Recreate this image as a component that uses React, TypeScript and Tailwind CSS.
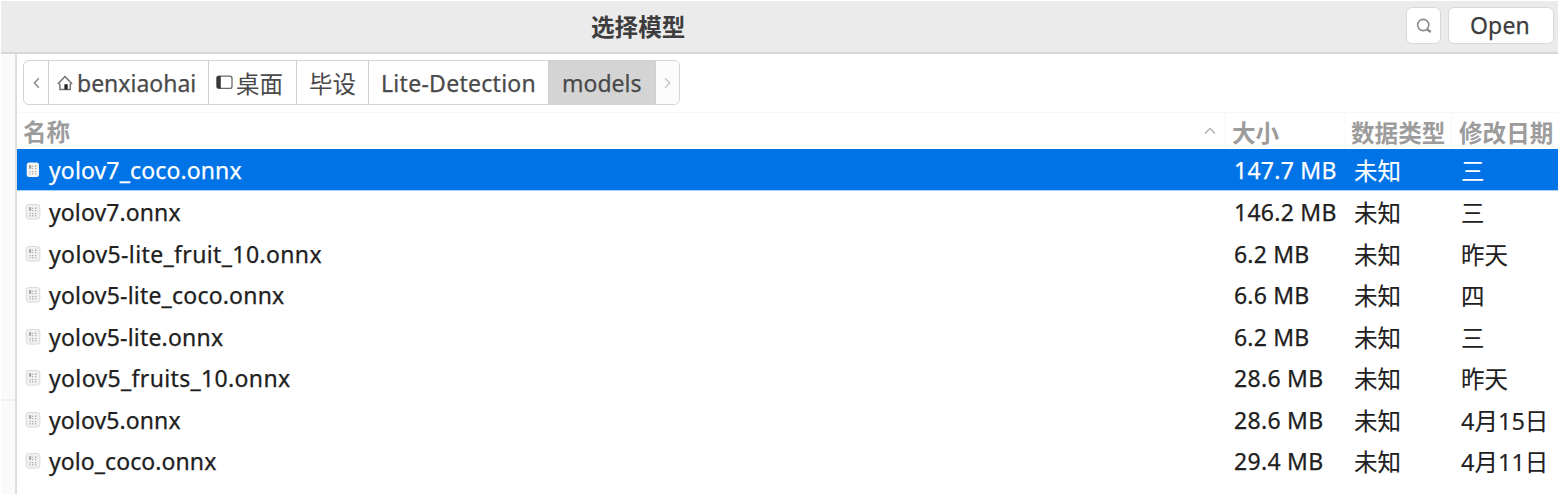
import type { ReactNode } from "react";

type FileRow = {
  name: string;
  nameSpacing: string;
  size: string;
  sizeSpacing: string;
  modified: string;
};

const files: FileRow[] = [
  { name: "yolov7_coco.onnx", nameSpacing: "tracking-[0.13px]", size: "147.7 MB", sizeSpacing: "tracking-[0.25px]", modified: "三" },
  { name: "yolov7.onnx", nameSpacing: "tracking-[0.1px]", size: "146.2 MB", sizeSpacing: "tracking-[0.25px]", modified: "三" },
  { name: "yolov5-lite_fruit_10.onnx", nameSpacing: "tracking-[0.37px]", size: "6.2 MB", sizeSpacing: "tracking-[0.2px]", modified: "昨天" },
  { name: "yolov5-lite_coco.onnx", nameSpacing: "tracking-[0.2px]", size: "6.6 MB", sizeSpacing: "tracking-[0.2px]", modified: "四" },
  { name: "yolov5-lite.onnx", nameSpacing: "tracking-[0.2px]", size: "6.2 MB", sizeSpacing: "tracking-[0.2px]", modified: "三" },
  { name: "yolov5_fruits_10.onnx", nameSpacing: "tracking-[0.35px]", size: "28.6 MB", sizeSpacing: "tracking-[0.3px]", modified: "昨天" },
  { name: "yolov5.onnx", nameSpacing: "tracking-[0.1px]", size: "28.6 MB", sizeSpacing: "tracking-[0.3px]", modified: "4月15日" },
  { name: "yolo_coco.onnx", nameSpacing: "tracking-[0.08px]", size: "29.4 MB", sizeSpacing: "tracking-[0.3px]", modified: "4月11日" },
];

function FileIcon({ selected }: { selected: boolean }) {
  return (
    <svg width="16" height="18" viewBox="0 0 16 18" className="block shrink-0">
      <rect
        x={selected ? 1.7 : 1.2}
        y="1.5"
        width={selected ? 12.3 : 13.6}
        height="14.6"
        rx="2.4"
        fill={selected ? "#f6f6f4" : "#f1f1f1"}
        stroke={selected ? "none" : "#dadada"}
      />
      <g fill={selected ? "#958f88" : "#999"}>
        <rect x="4" y="4.2" width="2.2" height="3.6" opacity=".85" />
        <rect x="7" y="4.8" width="1.2" height="1.2" opacity=".7" />
        <rect x="7" y="7" width="1.2" height="1.2" opacity=".7" />
        <rect x="10" y="4.4" width="1.4" height="1.6" opacity=".75" />
        <rect x="10" y="7" width="1.4" height="1.2" opacity=".7" />
        <rect x="4.4" y="10" width="1.4" height="1.2" opacity=".7" />
        <rect x="4.4" y="12.2" width="1.4" height="1.2" opacity=".7" />
        <rect x="7" y="10" width="1.3" height="1.2" opacity=".8" />
        <rect x="7" y="12.2" width="1.3" height="1.2" opacity=".8" />
        <rect x="10" y="10" width="1.4" height="1.2" opacity=".7" />
        <rect x="10" y="12.2" width="1.4" height="1.2" opacity=".7" />
      </g>
    </svg>
  );
}

function HomeIcon() {
  return (
    <svg width="16" height="16" viewBox="0 0 16 16" fill="none" className="block shrink-0">
      <path d="M.8 9 8 1.6 15.2 9M2.9 8.4v6h10.4v-6" stroke="#747474" strokeWidth="1.5" strokeLinejoin="round" />
      <path d="M7.4 9.2h3.3v5.2H7.4z" fill="#222" />
    </svg>
  );
}

function DesktopIcon() {
  return (
    <svg width="17" height="15" viewBox="0 0 17 15" fill="none" className="block shrink-0">
      <rect x="1" y="1.2" width="15" height="12.2" rx="2.2" stroke="#6a6a6a" strokeWidth="1.3" />
      <path d="M2.2 1h2.6v12.6H2.2Q.6 13.6.6 12V2.6Q.6 1 2.2 1z" fill="#383838" />
    </svg>
  );
}

function Crumb({ className, children }: { className: string; children: ReactNode }) {
  return (
    <div className={`flex h-full shrink-0 items-center whitespace-nowrap border-r border-[#cfcfcf] ${className}`}>
      {children}
    </div>
  );
}

export default function App() {
  return (
    <div className="flex h-[494px] w-[1558px] flex-col overflow-hidden bg-white pl-px pt-px font-['Noto_Sans','Noto_Sans_CJK_SC',sans-serif] text-[23px] text-[#2e2e2e] [-webkit-text-stroke:0.25px]">
      <header className="flex h-[53px] shrink-0 border-b-2 border-[#d8d8d8] bg-[#ebebeb]">
        <div className="w-[1405px] pl-[590px] pt-px font-['Noto_Sans_CJK_SC',sans-serif] text-[23.6px] font-bold leading-[48px] text-[#3d3d3d] [-webkit-text-stroke:0px]">
          选择模型
        </div>
        <button className="mt-[6px] flex h-[37px] w-[35px] items-center justify-center rounded-[6px] border border-[#d8d8d8] bg-white">
          <svg width="16" height="16" viewBox="0 0 16 16" fill="none" stroke="#8a8a8a" strokeWidth="1.6">
            <circle cx="7.2" cy="7" r="5.6" />
            <path d="m10.6 11 4.2 3" strokeWidth="2.2" />
          </svg>
        </button>
        <button className="ml-[7px] mt-[6px] h-[37px] w-[106px] rounded-[6px] border border-[#d8d8d8] bg-white pr-[2px] text-center leading-[35px] tracking-[0.2px] text-[#3d3d3d]">
          Open
        </button>
      </header>
      <div className="flex min-h-0 flex-1">
        <aside className="w-[16px] shrink-0 border-r-2 border-[#dedede] bg-[#fafafa]">
          <div className="h-[347px] border-b-2 border-[#f0f0f0]" />
        </aside>
        <main className="min-w-0 flex-1">
          <nav className="ml-[6px] mt-[6px] flex h-[45px] w-[657px] overflow-hidden rounded-[6px] border border-[#d4d4d4] text-[#4a4a4a]">
            <Crumb className="w-[25px] justify-center">
              <svg width="7" height="12" viewBox="0 0 7 12" fill="none" stroke="#8a8a8a" strokeWidth="1.5">
                <path d="M5.8 1.2 1.4 6l4.4 4.8" />
              </svg>
            </Crumb>
            <Crumb className="w-[160px] gap-[4px] pl-[8px]">
              <HomeIcon />
              <span className="pt-px">benxiaohai</span>
            </Crumb>
            <Crumb className="w-[88px] gap-[3px] pl-[7px]">
              <DesktopIcon />
              <span className="pt-[4px] text-[23.5px] [-webkit-text-stroke:0px]">桌面</span>
            </Crumb>
            <Crumb className="w-[72px] pl-[12px]">
              <span className="pt-[4px] text-[23.5px] [-webkit-text-stroke:0px]">毕设</span>
            </Crumb>
            <Crumb className="w-[180px] pl-[12px] pt-px tracking-[0.28px]">Lite-Detection</Crumb>
            <Crumb className="w-[107px] bg-[#d4d4d4] pl-[13px] pt-px">models</Crumb>
            <div className="flex flex-1 items-center justify-center bg-[#fcfcfc]">
              <svg width="7" height="12" viewBox="0 0 7 12" fill="none" stroke="#c6c6c6" strokeWidth="1.5">
                <path d="m1.2 1.2 4.4 4.8-4.4 4.8" />
              </svg>
            </div>
          </nav>
          <div className="mt-[7px] flex h-[37px] border-t border-[#f7f7f7] font-['Noto_Sans_CJK_SC',sans-serif] text-[23.6px] font-bold leading-[39px] text-[#9c9c9c] [-webkit-text-stroke:0px]">
            <div className="flex w-[1209px] items-center justify-between border-r border-[#f5f5f5] pl-[6px] pr-[9px]">
              <span>名称</span>
              <svg width="12" height="8" viewBox="0 0 12 8" fill="none" stroke="#b0b0b0" strokeWidth="1.4">
                <path d="M1 6.4 6 1.4l5 5" />
              </svg>
            </div>
            <div className="w-[119px] border-r border-[#f9f9f9] pl-[6px]">大小</div>
            <div className="w-[107px] whitespace-nowrap border-r border-[#f5f5f5] pl-[6px]">数据类型</div>
            <div className="whitespace-nowrap pl-[7px]">修改日期</div>
          </div>
          <div>
            {files.map((file, index) => (
              <div
                key={file.name}
                className={`flex whitespace-nowrap ${index === 0 ? "h-[42px] border-b border-[#a9d0f7] bg-[#0073e6] leading-[43px] text-white" : "h-[41.5px] leading-[42px] text-[#202020]"}`}
              >
                <div className="flex w-[1217px] pl-[8px]">
                  <div className="pt-[12px]">
                    <FileIcon selected={index === 0} />
                  </div>
                  <span className={`pl-[8px] ${file.nameSpacing}`}>{file.name}</span>
                </div>
                <span className={`w-[120px] ${file.sizeSpacing}`}>{file.size}</span>
                <span className="w-[107px] pt-px text-[23.5px] [-webkit-text-stroke:0.1px]">未知</span>
                <span className="pt-px text-[23.5px] [-webkit-text-stroke:0.1px]">{file.modified}</span>
              </div>
            ))}
          </div>
        </main>
      </div>
    </div>
  );
}
